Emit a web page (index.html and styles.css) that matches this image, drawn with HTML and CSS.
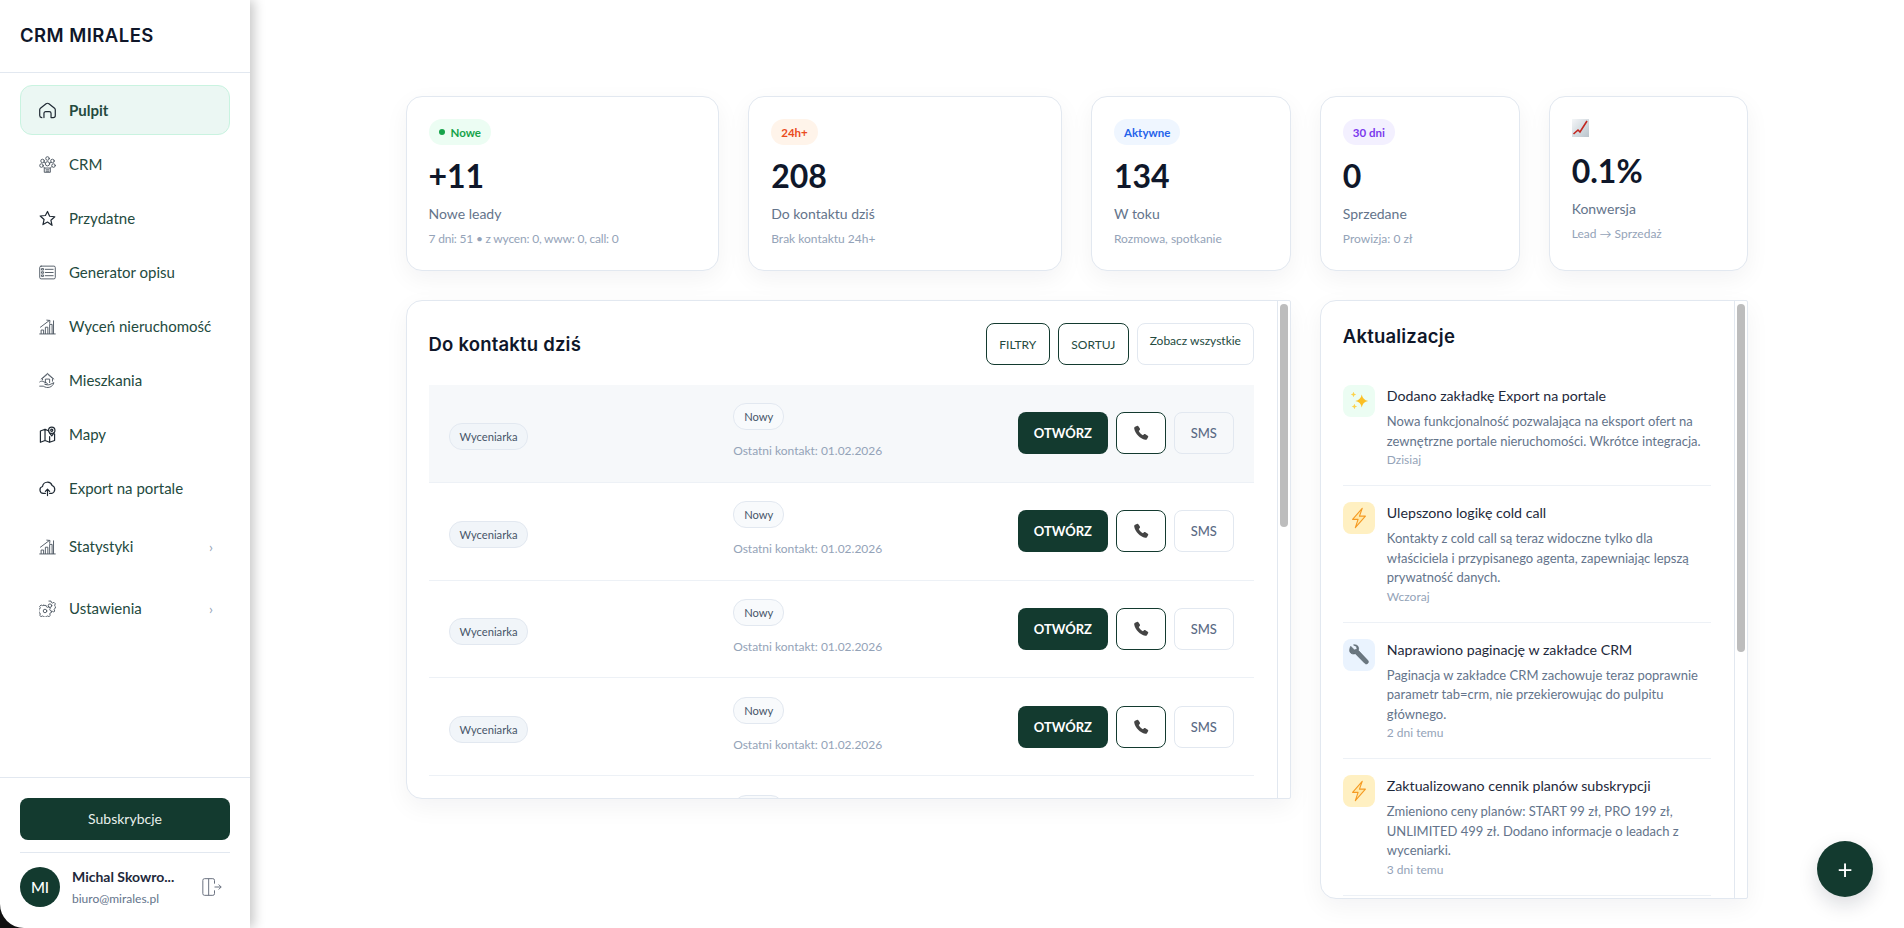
FILE: index.html
```html
<!DOCTYPE html>
<html lang="pl">
<head>
  <meta charset="UTF-8" />
  <meta name="viewport" content="width=device-width, initial-scale=1.0"/>
  <title>CRM Mirales</title>
  <link rel="stylesheet" href="styles.css">
</head>
<body>

  <!-- Shared icons -->
  <svg class="icon-defs" width="0" height="0">
    <symbol id="i-phone" viewBox="0 0 24 24"><path d="M6.4 2.6c.7-.5 1.6-.3 2.1.4l2 3.1c.4.6.3 1.400-.2 1.900L9 9.300c.9 2 3.500 4.700 5.600 5.700l1.400-1.300c.5-.5 1.300-.6 1.900-.2l3.100 2c.7.5.9 1.400.4 2.100l-1.300 2.300c-.5.9-1.500 1.300-2.500 1.100C10.900 19.600 4.400 13.100 3 6.300c-.2-1 .2-2 1.100-2.500z"/></symbol>
    <symbol id="i-bolt" viewBox="0 0 24 24"><path d="M15.500 1.500 5 13.500h6l-3 9 11-12.500h-6.500z" fill="#ffe9a8" stroke="#f59a23" stroke-width="1.200" stroke-linejoin="round"/></symbol>
    <symbol id="i-bars" viewBox="0 0 24 24"><path d="M1 22.500h22M3 22v-5h3.500v5M9 22v-9h3.500v9M15 22V9h3.500v13M20.500 22V4"/><path d="M2 13 14 4"/><path d="m11 3 4.500.5-.5 4"/></symbol>
  </svg>

  <!-- Sidebar -->
  <aside class="sidebar">
    <div class="brand">CRM MIRALES</div>

    <nav class="nav">
      <a class="nav-item active" href="#">
        <svg class="nav-icon" viewBox="0 0 24 24"><path d="M4 22c-1.600-.2-3-1.200-3-3v-8c0-.9.400-1.700 1-2.200l8-6.300c1.100-.8 2.900-.8 4 0l8 6.300c.6.500 1 1.300 1 2.200v8c0 1.800-1.400 3-3 3h-3v-6a2.500 2.500 0 0 0-2.500-2.500h-5A2.500 2.500 0 0 0 7 16v6"/></svg>
        <span>Pulpit</span>
      </a>
      <a class="nav-item" href="#">
        <svg class="nav-icon thin" viewBox="0 0 24 24"><circle cx="12" cy="3.500" r="2.500"/><circle cx="5" cy="7" r="2.500"/><circle cx="19" cy="7" r="2.500"/><circle cx="3.500" cy="13.500" r="2.500"/><circle cx="20.500" cy="13.500" r="2.500"/><circle cx="12" cy="11" r="3"/><path d="M8 17h8v6H8zM10 19.500h4M10 21.500h4M7 9l2 1M17 9l-2 1M6 15l2 2M18 15l-2 2"/></svg>
        <span>CRM</span>
      </a>
      <a class="nav-item" href="#">
        <svg class="nav-icon" viewBox="0 0 24 24"><path d="m12 2 3 6.800 7.300.7-5.500 4.900 1.600 7.200L12 17l-6.400 3.600 1.600-7.200-5.500-4.900 7.300-.7z"/></svg>
        <span>Przydatne</span>
      </a>
      <a class="nav-item" href="#">
        <svg class="nav-icon thin" viewBox="0 0 24 24"><rect x="1" y="3" width="22" height="18" rx="2"/><path d="M9 7.500h11M9 12h11M9 16.500h11M4 6.500h2.500v2H4zM4 11h2.500v2H4zM4 15.500h2.500v2H4z"/></svg>
        <span>Generator opisu</span>
      </a>
      <a class="nav-item" href="#">
        <svg class="nav-icon thin"><use href="#i-bars"/></svg>
        <span>Wyceń nieruchomość</span>
      </a>
      <a class="nav-item" href="#">
        <svg class="nav-icon thin" viewBox="0 0 24 24"><path d="M5 11v-2l7-6 7 6v4M3 10l9-8 9 8M9 15v-5h6v5M1 14c2-1.500 4-1.500 6 0l4 1.500c1.500.6 1 2.500-.5 2.200l-2.500-.5 3 .8c2 .5 4 0 6-1l4-2c-.5 3-3 5.500-6 6.500-3 .8-6 .4-9-1.500H1"/></svg>
        <span>Mieszkania</span>
      </a>
      <a class="nav-item" href="#">
        <svg class="nav-icon" viewBox="0 0 24 24"><path d="M14 7 8.500 4.500 2 7v16l6.500-2.500L15 23l7-2.500V11M8.500 4.500v16M15 15v8"/><circle cx="18" cy="6" r="4.500"/><circle cx="18" cy="6" r="1.500"/><path d="m15 10 3 4 3-4"/></svg>
        <span>Mapy</span>
      </a>
      <a class="nav-item" href="#">
        <svg class="nav-icon" viewBox="0 0 24 24"><path d="M9 19H6a5 5 0 0 1-1-9.800 7 7 0 0 1 13.500-1.500A6 6 0 0 1 18 19h-3M12 22v-9M9 16l3-3 3 3"/></svg>
        <span>Export na portale</span>
      </a>
      <a class="nav-item nav-toggle" href="#">
        <svg class="nav-icon thin"><use href="#i-bars"/></svg>
        <span>Statystyki</span>
        <i class="chevron">›</i>
      </a>
      <a class="nav-item nav-toggle" href="#">
        <svg class="nav-icon thin" viewBox="0 0 24 24"><circle cx="15.500" cy="8" r="2.500"/><path d="M14 1.500h3l.5 2 1.800.8 1.800-1 2 2.100-1 1.800.5 1.800.5.500v2l-1 .5-.8 1.800 1 1.700-1.500 1.500-1.800-1-1.200.5"/><circle cx="8.500" cy="15.500" r="2.500"/><path d="M7 8.500h3l.5 2 1.800.8 1.800-1 2 2.100-1 1.800.7 1.800 1.700.5v2.500l-1.700.5-.7 1.800 1 1.700-2 2-1.800-1-1.800.7-.5 1h-3l-.5-1-1.800-.7-1.800 1-2-2 1-1.700-.7-1.800-1.500-.5V14l1.500-.5.7-1.800-1-1.800 2-2.100 1.800 1 1.800-.8z" transform="translate(0 -.500) scale(1 .96)"/></svg>
        <span>Ustawienia</span>
        <i class="chevron">›</i>
      </a>
    </nav>

    <div class="side-footer">
      <button class="subscribe">Subskrybcje</button>
      <div class="user">
        <div class="avatar">MI</div>
        <div class="user-info">
          <div class="user-name">Michal Skowro...</div>
          <div class="user-mail">biuro@mirales.pl</div>
        </div>
        <svg class="logout" viewBox="0 0 24 24"><path d="M15 8V4a2 2 0 0 0-2-2H3a2 2 0 0 0-2 2v16a2 2 0 0 0 2 2h10a2 2 0 0 0 2-2v-4M8 2v20M15 12h8M20 9l3 3-3 3"/></svg>
      </div>
    </div>
  </aside>

  <!-- Main -->
  <main class="main">
    <div class="dashboard">

      <div class="stat-card">
        <span class="badge badge-green"><i class="dot"></i>Nowe</span>
        <div class="stat-value">+11</div>
        <div class="stat-label">Nowe leady</div>
        <div class="stat-sub tight">7 dni: 51 • z wycen: 0, www: 0, call: 0</div>
      </div>
      <div class="stat-card">
        <span class="badge badge-orange">24h+</span>
        <div class="stat-value">208</div>
        <div class="stat-label">Do kontaktu dziś</div>
        <div class="stat-sub">Brak kontaktu 24h+</div>
      </div>
      <div class="stat-card">
        <span class="badge badge-blue">Aktywne</span>
        <div class="stat-value">134</div>
        <div class="stat-label">W toku</div>
        <div class="stat-sub">Rozmowa, spotkanie</div>
      </div>
      <div class="stat-card">
        <span class="badge badge-purple">30 dni</span>
        <div class="stat-value">0</div>
        <div class="stat-label">Sprzedane</div>
        <div class="stat-sub">Prowizja: 0 zł</div>
      </div>
      <div class="stat-card">
        <svg class="stat-emoji" viewBox="0 0 17 18">
          <defs><linearGradient id="chart-bg" x1="0" y1="0" x2="1" y2="1"><stop offset="0" stop-color="#f4f6f8"/><stop offset="1" stop-color="#b9c4cc"/></linearGradient></defs>
          <rect width="17" height="18" fill="url(#chart-bg)"/>
          <path d="M1.500 15 6 11l2 2 7-11" fill="none" stroke="#c2271f" stroke-width="1.600"/>
        </svg>
        <div class="stat-value">0.1%</div>
        <div class="stat-label">Konwersja</div>
        <div class="stat-sub">Lead → Sprzedaż</div>
      </div>

      <!-- Leads -->
      <section class="panel leads">
        <div class="panel-content">
          <div class="panel-head">
            <h2>Do kontaktu dziś</h2>
            <div class="head-actions">
              <button class="btn-outline">FILTRY</button>
              <button class="btn-outline">SORTUJ</button>
              <button class="btn-all">Zobacz wszystkie</button>
            </div>
          </div>

          <div class="lead-row hover">
            <span class="source-pill">Wyceniarka</span>
            <div class="lead-status"><span class="status-pill">Nowy</span><span class="last-contact">Ostatni kontakt: 01.02.2026</span></div>
            <div class="lead-actions"><button class="btn-open">OTWÓRZ</button><button class="btn-phone"><svg><use href="#i-phone"/></svg></button><button class="btn-sms">SMS</button></div>
          </div>
          <div class="lead-row">
            <span class="source-pill">Wyceniarka</span>
            <div class="lead-status"><span class="status-pill">Nowy</span><span class="last-contact">Ostatni kontakt: 01.02.2026</span></div>
            <div class="lead-actions"><button class="btn-open">OTWÓRZ</button><button class="btn-phone"><svg><use href="#i-phone"/></svg></button><button class="btn-sms">SMS</button></div>
          </div>
          <div class="lead-row">
            <span class="source-pill">Wyceniarka</span>
            <div class="lead-status"><span class="status-pill">Nowy</span><span class="last-contact">Ostatni kontakt: 01.02.2026</span></div>
            <div class="lead-actions"><button class="btn-open">OTWÓRZ</button><button class="btn-phone"><svg><use href="#i-phone"/></svg></button><button class="btn-sms">SMS</button></div>
          </div>
          <div class="lead-row">
            <span class="source-pill">Wyceniarka</span>
            <div class="lead-status"><span class="status-pill">Nowy</span><span class="last-contact">Ostatni kontakt: 01.02.2026</span></div>
            <div class="lead-actions"><button class="btn-open">OTWÓRZ</button><button class="btn-phone"><svg><use href="#i-phone"/></svg></button><button class="btn-sms">SMS</button></div>
          </div>
          <div class="lead-row">
            <span class="source-pill">Wyceniarka</span>
            <div class="lead-status"><span class="status-pill">Nowy</span><span class="last-contact">Ostatni kontakt: 01.02.2026</span></div>
            <div class="lead-actions"><button class="btn-open">OTWÓRZ</button><button class="btn-phone"><svg><use href="#i-phone"/></svg></button><button class="btn-sms">SMS</button></div>
          </div>
        </div>
        <div class="rail"><div class="thumb thumb-leads"></div></div>
      </section>

      <!-- Updates -->
      <section class="panel updates">
        <div class="panel-content">
          <h2>Aktualizacje</h2>

          <div class="update">
            <div class="update-icon tint-green">
              <svg viewBox="0 0 24 24"><path d="M15 5q1 6 7 7-6 1-7 7-1-6-7-7 6-1 7-7z" fill="#fbbf24"/><path d="M6 2q.4 2.600 3 3-2.600.4-3 3-.4-2.600-3-3 2.600-.4 3-3zM7 15q.4 2.600 3 3-2.600.4-3 3-.4-2.600-3-3 2.600-.4 3-3z" fill="#fcd34d"/></svg>
            </div>
            <div class="update-body">
              <div class="update-title">Dodano zakładkę Export na portale</div>
              <div class="update-text">Nowa funkcjonalność pozwalająca na eksport ofert na zewnętrzne portale nieruchomości. Wkrótce integracja.</div>
              <div class="update-date">Dzisiaj</div>
            </div>
          </div>
          <div class="update">
            <div class="update-icon tint-yellow"><svg><use href="#i-bolt"/></svg></div>
            <div class="update-body">
              <div class="update-title">Ulepszono logikę cold call</div>
              <div class="update-text">Kontakty z cold call są teraz widoczne tylko dla właściciela i przypisanego agenta, zapewniając lepszą prywatność danych.</div>
              <div class="update-date">Wczoraj</div>
            </div>
          </div>
          <div class="update">
            <div class="update-icon tint-blue">
              <svg viewBox="0 0 24 24"><path d="M3 2.500 7 6.500l3-1-1-3-3-1.500C8.500.500 11 1.500 11.500 4c.2 1 .1 2-.3 2.800l10.300 11c1 1.100 1 2.400.1 3.300-.9.900-2.300.9-3.300-.1L8 10.500c-2.300 1-5 .3-6-2-.5-1.500-.2-4 1-6z" fill="#6b7780" stroke="#4e5a63" stroke-width=".6"/></svg>
            </div>
            <div class="update-body">
              <div class="update-title">Naprawiono paginację w zakładce CRM</div>
              <div class="update-text">Paginacja w zakładce CRM zachowuje teraz poprawnie parametr tab=crm, nie przekierowując do pulpitu głównego.</div>
              <div class="update-date">2 dni temu</div>
            </div>
          </div>
          <div class="update">
            <div class="update-icon tint-yellow"><svg><use href="#i-bolt"/></svg></div>
            <div class="update-body">
              <div class="update-title">Zaktualizowano cennik planów subskrypcji</div>
              <div class="update-text">Zmieniono ceny planów: START 99 zł, PRO 199 zł, UNLIMITED 499 zł. Dodano informacje o leadach z wyceniarki.</div>
              <div class="update-date">3 dni temu</div>
            </div>
          </div>
        </div>
        <div class="rail"><div class="thumb thumb-updates"></div></div>
      </section>

    </div>
  </main>

  <button class="fab">+</button>

</body>
</html>
```

FILE: styles.css
```css
* {
  box-sizing: border-box;
}
html, body {
  height: 100%;
}
body {
  margin: 0;
  display: flex;
  background: #111;
  font-family: "Lato", "Liberation Sans", sans-serif;
  color: #0f172a;
  overflow: hidden;
}
button {
  font-family: inherit;
  cursor: pointer;
}
.icon-defs {
  position: absolute;
}

/* Sidebar */
.sidebar {
  width: 250px;
  flex-shrink: 0;
  display: flex;
  flex-direction: column;
  background: white;
  border-bottom-left-radius: 24px;
  box-shadow: 4px 0 12px rgba(0, 0, 0, 0.22);
  position: relative;
  z-index: 2;
}
.brand {
  height: 73px;
  padding: 0 0 3px 20px;
  display: flex;
  align-items: center;
  border-bottom: 1px solid #e2e8f0;
  font-family: "Inter", sans-serif;
  font-size: 18.500px;
  font-weight: 600;
  letter-spacing: 0.45px;
}
.nav {
  flex: 1;
  display: flex;
  flex-direction: column;
  gap: 4px;
  padding: 12px 20px 0;
}
.nav-item {
  height: 50px;
  padding: 0 16px 0 18px;
  display: flex;
  align-items: center;
  gap: 13px;
  border: 1px solid transparent;
  border-radius: 12px;
  color: #244a3e;
  text-decoration: none;
  font-size: 15px;
  white-space: nowrap;
}
.nav-item.active {
  background: #ebf7f3;
  border-color: #c9f3e0;
  font-weight: 700;
}
.nav-toggle {
  height: 58px;
}
.nav-icon {
  width: 17px;
  height: 17px;
  flex-shrink: 0;
  fill: none;
  stroke: #1f2933;
  stroke-width: 1.700;
  stroke-linejoin: round;
  stroke-linecap: round;
}
.nav-icon.thin {
  stroke: #4b5560;
  stroke-width: 1.300;
}
.chevron {
  margin-left: auto;
  color: #94a3b8;
  font-style: normal;
  font-size: 14px;
}
.side-footer {
  padding: 0 20px;
  border-top: 1px solid #e2e8f0;
}
.subscribe {
  width: 100%;
  height: 42px;
  margin-top: 20px;
  padding: 0 0 2px;
  border: none;
  border-radius: 8px;
  background: #133a2f;
  color: #e8f0ec;
  font-size: 14px;
}
.user {
  margin-top: 12px;
  padding: 14px 0 21px;
  display: flex;
  align-items: center;
  border-top: 1px solid #e2e8f0;
}
.avatar {
  width: 40px;
  height: 40px;
  border-radius: 50%;
  background: #133a2f;
  color: white;
  display: flex;
  align-items: center;
  justify-content: center;
  font-size: 15px;
  font-weight: 500;
}
.user-info {
  margin-left: 12px;
  flex: 1;
}
.user-name {
  font-size: 14px;
  font-weight: 700;
  color: #1e293b;
}
.user-mail {
  margin-top: 6px;
  font-size: 12px;
  color: #64748b;
}
.logout {
  width: 20px;
  height: 20px;
  margin-right: 8px;
  fill: none;
  stroke: #6b7280;
  stroke-width: 1.200;
}

/* Main */
.main {
  flex: 1;
  min-width: 0;
  background: white;
}
.dashboard {
  width: 1343px;
  margin: 0 auto;
  padding-top: 96px;
  display: grid;
  grid-template-columns: 1.57fr 1.57fr 1fr 1fr 1fr;
  gap: 29px;
  align-items: start;
}
.stat-card {
  height: 175px;
  padding: 22px;
  background: white;
  border: 1px solid #e2e8f0;
  border-radius: 16px;
  box-shadow: 0 8px 24px rgba(15, 23, 42, 0.05);
}
.badge {
  display: flex;
  align-items: center;
  width: fit-content;
  height: 26px;
  padding: 0 10px;
  border-radius: 13px;
  font-size: 11.500px;
  font-weight: 700;
}
.badge-green { background: #ecfdf3; color: #16a34a; }
.badge-orange { background: #fff4ea; color: #ea4c1d; }
.badge-blue { background: #eff6ff; color: #2563eb; }
.badge-purple { background: #f3f0ff; color: #7c3aed; }
.dot {
  width: 6px;
  height: 6px;
  margin-right: 6px;
  border-radius: 50%;
  background: #16a34a;
}
.stat-emoji {
  display: block;
  width: 17px;
  height: 18px;
  margin-bottom: 15px;
}
.stat-value {
  margin-top: 12px;
  font-size: 32px;
  line-height: 38px;
  font-weight: 700;
}
.stat-label {
  margin-top: 10px;
  font-size: 14px;
  line-height: 18px;
  color: #64748b;
}
.stat-sub {
  margin-top: 8px;
  font-size: 12px;
  line-height: 16px;
  color: #94a3b8;
}
.stat-sub.tight {
  letter-spacing: -0.2px;
}

/* Panels */
.panel {
  display: flex;
  background: white;
  border: 1px solid #e2e8f0;
  border-radius: 16px 2px 2px 16px;
  box-shadow: 0 8px 24px rgba(15, 23, 42, 0.05);
  overflow: hidden;
}
.panel h2 {
  margin: 0;
  font-family: "Inter", sans-serif;
  font-size: 18.500px;
  font-weight: 600;
  letter-spacing: 0.2px;
}
.panel-content {
  flex: 1;
  min-width: 0;
  overflow: hidden;
  padding: 0 23px 0 22px;
}
.rail {
  width: 13px;
  flex-shrink: 0;
  padding: 3px 0 0 2px;
  border-left: 1px solid #e2e8f0;
}
.thumb {
  width: 8px;
  border-radius: 4px;
  background: #bdbdbd;
}
.thumb-leads { height: 223px; }
.thumb-updates { height: 348px; }
.leads {
  grid-column: span 3;
  height: 499px;
}
.updates {
  grid-column: span 2;
  height: 599px;
}

/* Leads */
.panel-head {
  height: 84px;
  padding-top: 22px;
  display: flex;
  justify-content: space-between;
  align-items: flex-start;
}
.panel-head h2 {
  line-height: 42px;
}
.head-actions {
  display: flex;
  gap: 8px;
}
.btn-outline, .btn-all {
  height: 42px;
  background: white;
  border-radius: 8px;
  font-size: 12px;
  color: #244a3e;
}
.btn-outline {
  width: 64px;
  border: 1px solid #133a2f;
  padding: 0;
}
.btn-outline + .btn-outline {
  width: 71px;
}
.btn-all {
  width: 117px;
  padding: 0 0 8px;
  border: 1px solid #e2e8f0;
}
.lead-row {
  height: 97.800px;
  padding: 0 20px;
  display: grid;
  grid-template-columns: 1fr 1fr auto;
  gap: 16px;
  align-items: center;
  border-bottom: 1px solid #edf1f6;
}
.lead-row.hover {
  background: #f6f8fa;
}
.source-pill, .status-pill {
  height: 27px;
  display: inline-flex;
  align-items: center;
  padding: 0 10px;
  border: 1px solid #e2e8f0;
  border-radius: 13px;
  font-size: 11.200px;
  color: #475569;
}
.source-pill {
  justify-self: start;
  margin-top: 6px;
  background: #f1f5f9;
}
.status-pill {
  background: #f8fafc;
}
.lead-status {
  display: flex;
  flex-direction: column;
  align-items: flex-start;
  gap: 13px;
  margin-bottom: 4px;
}
.last-contact {
  font-size: 12px;
  line-height: 16px;
  color: #94a3b8;
}
.lead-actions {
  display: flex;
  gap: 8px;
}
.lead-actions button {
  height: 42px;
  border-radius: 8px;
  padding: 0;
}
.btn-open {
  width: 90px;
  border: none;
  background: #133a2f;
  color: white;
  font-size: 13px;
  font-weight: 700;
}
.btn-phone {
  width: 50px;
  background: white;
  border: 1px solid #133a2f;
}
.btn-phone svg {
  display: block;
  width: 18px;
  height: 18px;
  margin: 0 auto;
  fill: #444;
}
.btn-sms {
  width: 60px;
  background: transparent;
  border: 1px solid #e2e8f0;
  color: #5b6b85;
  font-size: 13px;
  font-weight: 500;
}

/* Updates */
.updates h2 {
  line-height: 26px;
  margin: 22px 0 36px;
}
.update {
  display: flex;
  gap: 12px;
  padding-bottom: 16px;
  margin-bottom: 16px;
  border-bottom: 1px solid #edf1f6;
}
.update-icon {
  width: 32px;
  height: 32px;
  flex-shrink: 0;
  border-radius: 8px;
  display: flex;
  align-items: center;
  justify-content: center;
}
.update-icon svg {
  width: 22px;
  height: 22px;
}
.tint-green { background: #ecfdf3; }
.tint-yellow { background: #fff0c2; }
.tint-blue { background: #eaf3fe; }
.update-title {
  font-size: 14.200px;
  line-height: 22px;
  color: #1e293b;
}
.update-text {
  margin-top: 5px;
  font-size: 13px;
  line-height: 19.500px;
  color: #64748b;
}
.update-date {
  font-size: 12px;
  line-height: 18px;
  color: #94a3b8;
}

/* Floating button */
.fab {
  position: fixed;
  left: 1817px;
  top: 841px;
  width: 56px;
  height: 56px;
  padding: 0;
  border: none;
  border-radius: 50%;
  background: #133a2f;
  color: white;
  font-size: 26px;
  box-shadow: 0 8px 20px rgba(15, 23, 42, 0.15);
  z-index: 5;
}
```
